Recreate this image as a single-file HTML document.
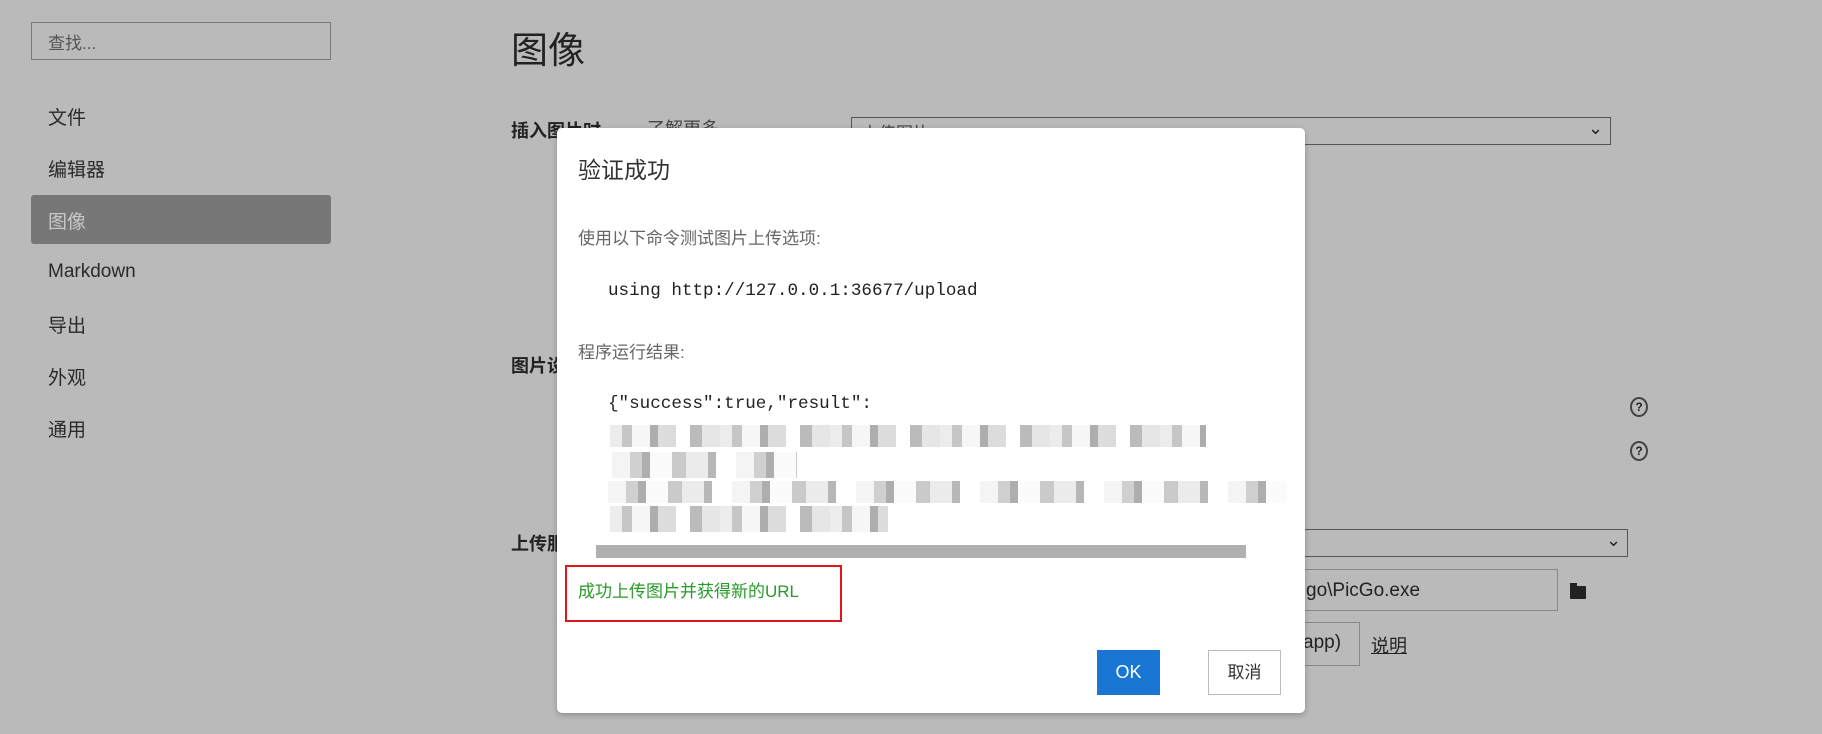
<!DOCTYPE html>
<html><head><meta charset="utf-8"><style>
*{margin:0;padding:0;box-sizing:border-box}
body{width:1822px;height:734px;background:#bababa;position:relative;overflow:hidden;font-family:"Liberation Sans","Noto Sans CJK SC",sans-serif;color:#222}
.a{position:absolute;white-space:nowrap}
.nav{left:48px;font-size:19px;color:#2a2a2a}
.mono{font-family:"Liberation Mono","DejaVu Sans Mono",monospace}
.blur{position:absolute;height:22px;opacity:.8}
.b1{background:repeating-linear-gradient(90deg,#e8e8e8 0 12px,#b8b8b8 12px 22px,#f4f4f4 22px 40px,#999 40px 48px,#d4d4d4 48px 66px,#fff 66px 80px,#aaa 80px 92px,#e0e0e0 92px 110px)}
.b2{background:repeating-linear-gradient(90deg,#f2f2f2 0 18px,#c4c4c4 18px 30px,#9a9a9a 30px 38px,#fafafa 38px 60px,#bdbdbd 60px 74px,#e6e6e6 74px 96px,#a5a5a5 96px 104px,#fff 104px 124px)}
</style></head><body>
<div class="a" style="left:31px;top:22px;width:300px;height:38px;border:1px solid #7a7a7a;"></div>
<div class="a" style="left:48px;top:29px;font-size:17px;color:#555">查找...</div>
<div class="a nav" style="top:103px">文件</div>
<div class="a nav" style="top:155px">编辑器</div>
<div class="a" style="left:31px;top:195px;width:300px;height:49px;background:#777;border-radius:3px"></div>
<div class="a nav" style="top:207px;color:#c8c8c8">图像</div>
<div class="a nav" style="top:261px">Markdown</div>
<div class="a nav" style="top:311px">导出</div>
<div class="a nav" style="top:363px">外观</div>
<div class="a nav" style="top:415px">通用</div>
<div class="a" style="left:511px;top:20px;font-size:37px;color:#222">图像</div>
<div class="a" style="left:511px;top:117px;font-size:18px;font-weight:bold">插入图片时</div>
<div class="a" style="left:647px;top:115px;font-size:18px;color:#444">了解更多</div>
<div class="a" style="left:851px;top:117px;width:760px;height:28px;border:1px solid #555"></div>
<div class="a" style="left:862px;top:119px;font-size:17px;color:#444">上传图片</div>
<div class="a" style="left:1588px;top:118px;font-size:18px">⌄</div>
<div class="a" style="left:511px;top:352px;font-size:18px;font-weight:bold">图片设</div>
<div class="a" style="left:1630px;top:397px;width:18px;height:20px;border:2px solid #444;border-radius:50%;font-size:12px;text-align:center;line-height:16px;font-weight:bold">?</div>
<div class="a" style="left:1630px;top:441px;width:18px;height:20px;border:2px solid #444;border-radius:50%;font-size:12px;text-align:center;line-height:16px;font-weight:bold">?</div>
<div class="a" style="left:511px;top:530px;font-size:18px;font-weight:bold">上传服务</div>
<div class="a" style="left:1290px;top:529px;width:338px;height:28px;border:1px solid #555"></div>
<div class="a" style="left:1606px;top:530px;font-size:18px">⌄</div>
<div class="a" style="left:1290px;top:569px;width:268px;height:42px;border:1px solid #888"></div>
<div class="a" style="left:1306px;top:580px;font-size:19px;color:#222">go\PicGo.exe</div>
<div class="a" style="left:1570px;top:586px;width:16px;height:13px;background:#222;border-radius:1px"></div>
<div class="a" style="left:1570px;top:583px;width:7px;height:4px;background:#222"></div>
<div class="a" style="left:1290px;top:622px;width:70px;height:44px;border:1px solid #888;border-left:none"></div>
<div class="a" style="left:1303px;top:632px;font-size:19px">app)</div>
<div class="a" style="left:1371px;top:632px;font-size:18px;text-decoration:underline">说明</div>

<div class="a" style="left:557px;top:128px;width:748px;height:585px;background:#fff;border-radius:5px;box-shadow:0 2px 6px rgba(0,0,0,.25)"></div>
<div class="a" style="left:578px;top:151px;font-size:23px;color:#333">验证成功</div>
<div class="a" style="left:578px;top:224px;font-size:17px;color:#666">使用以下命令测试图片上传选项:</div>
<div class="a mono" style="left:608px;top:281px;font-size:17.6px;color:#222">using http://127.0.0.1:36677/upload</div>
<div class="a" style="left:578px;top:338px;font-size:17px;color:#666">程序运行结果:</div>
<div class="a mono" style="left:608px;top:394px;font-size:17.6px;color:#222">{"success":true,"result":</div>
<div class="blur b1" style="left:610px;top:425px;width:596px"></div>
<div class="blur b2" style="left:612px;top:452px;width:185px;height:26px"></div>
<div class="blur b2" style="left:608px;top:481px;width:678px"></div>
<div class="blur b1" style="left:610px;top:506px;width:278px;height:26px"></div>
<div class="a" style="left:596px;top:545px;width:650px;height:13px;background:#b0b0b0"></div>
<div class="a" style="left:565px;top:565px;width:277px;height:57px;border:2px solid #e0161e"></div>
<div class="a" style="left:578px;top:577px;font-size:17px;color:#2a9a2a">成功上传图片并获得新的URL</div>
<div class="a" style="left:1097px;top:650px;width:63px;height:45px;background:#1976d2;color:#fff;font-size:18px;text-align:center;line-height:45px">OK</div>
<div class="a" style="left:1208px;top:650px;width:73px;height:45px;border:1px solid #bbb;font-size:17px;text-align:center;line-height:43px;color:#333">取消</div>
</body></html>
